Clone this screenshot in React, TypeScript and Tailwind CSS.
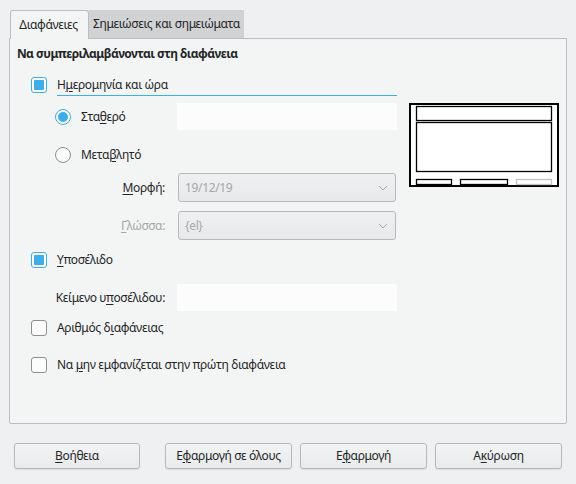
import React from "react";

// Underline one character (keyboard mnemonic)
function Mn({ text, i }: { text: string; i: number }) {
  return (
    <>
      {text.slice(0, i)}
      <span className="underline underline-offset-2 decoration-1">{text[i]}</span>
      {text.slice(i + 1)}
    </>
  );
}

function CheckBox({ checked }: { checked?: boolean }) {
  return checked ? (
    <div className="w-4 h-4 shrink-0 rounded-[3px] border border-[#3daee9] bg-[#fcfcfc] flex items-center justify-center">
      <div className="w-[10px] h-[10px] rounded-[1px] bg-[#3daee9]" />
    </div>
  ) : (
    <div className="w-4 h-4 shrink-0 rounded-[3px] border border-[#8d8f91] bg-[#fcfcfc]" />
  );
}

function Radio({ checked }: { checked?: boolean }) {
  return checked ? (
    <div className="w-4 h-4 shrink-0 rounded-full border border-[#3daee9] bg-[#fcfcfc] flex items-center justify-center">
      <div className="w-[10px] h-[10px] rounded-full bg-[#3daee9]" />
    </div>
  ) : (
    <div className="w-4 h-4 shrink-0 rounded-full border border-[#8d8f91] bg-[#fcfcfc]" />
  );
}

function Combo({ value }: { value: string }) {
  return (
    <div className="ml-[13px] w-[218px] h-full rounded-[3px] border border-[#b7b8b9] bg-gradient-to-b from-[#eff0f1] to-[#e8e9ea] flex items-center justify-between pl-[6px] pr-[7px] text-[#a5a7a8]">
      <span>{value}</span>
      <svg width="10" height="6" viewBox="0 0 10 6">
        <path d="M1 1 L5 5 L9 1" fill="none" stroke="#a5a7a8" strokeWidth="1" />
      </svg>
    </div>
  );
}

function Button({ children, w, ml }: { children: React.ReactNode; w: string; ml: string }) {
  return (
    <div
      className={`${w} ${ml} h-[26px] rounded-[3px] border border-[#b7b8b9] bg-gradient-to-b from-[#f2f3f3] to-[#e9eaeb] shadow-[0_1px_1px_rgba(0,0,0,0.08)] flex items-center justify-center`}
    >
      {children}
    </div>
  );
}

function Preview() {
  return (
    <svg width="150" height="84" viewBox="0 0 150 84" className="block">
      <rect x="1" y="1" width="148" height="82" fill="#ffffff" stroke="#000" strokeWidth="2" />
      <rect x="7.5" y="3.5" width="135" height="14" fill="none" stroke="#000" strokeWidth="1.3" />
      <rect x="7.5" y="19.5" width="135" height="49" fill="none" stroke="#000" strokeWidth="1.3" />
      <rect x="7.5" y="76.5" width="35" height="5" fill="none" stroke="#000" strokeWidth="1.3" />
      <rect x="51.5" y="76.5" width="47" height="5" fill="none" stroke="#000" strokeWidth="1.3" />
      <rect x="107.5" y="76.5" width="35" height="5" fill="none" stroke="#c4c4c4" strokeWidth="1.3" />
    </svg>
  );
}

export default function App() {
  return (
    <div className="w-[576px] h-[484px] bg-[#eff0f1] pl-[9px] pt-[10px] text-[12px] tracking-[-0.35px] text-[#232627] font-['Noto_Sans','DejaVu_Sans',sans-serif] overflow-hidden">
      {/* tabs */}
      <div className="flex h-[28px] pl-[1px] items-end">
        <div className="relative z-10 w-[79px] h-[29px] -mb-[1px] rounded-t-[3px] border border-b-0 border-[#bcbdbe] bg-[#f3f4f4] flex items-center justify-center pb-[1px] pr-[2px]">
          Διαφάνειες
        </div>
        <div className="w-[155px] h-[28px] bg-[#d1d2d3] flex items-center justify-center whitespace-nowrap">
          Σημειώσεις και σημειώματα
        </div>
      </div>

      {/* panel */}
      <div className="w-[558px] h-[386px] border border-[#bcbdbe] rounded-b-[2px] bg-[#f3f4f4] pt-[6px] pl-[7px]">
        <div className="h-[18px] leading-[18px] font-bold tracking-[-0.55px]">Να συμπεριλαμβάνονται στη διαφάνεια</div>

        <div className="flex">
          <div className="w-[380px] flex flex-col">
            <div className="mt-[10px] h-[23px] pl-[14px] flex items-center">
              <CheckBox checked />
              <div className="ml-[10px] flex-1 h-full border-b border-[#3daee9] flex items-center pt-[1px]">
                <Mn text="Ημερομηνία και ώρα" i={1} />
              </div>
            </div>

            <div className="mt-[7px] h-[27px] pl-[38px] flex items-center">
              <Radio checked />
              <div className="ml-[10px] w-[96px]">
                <Mn text="Σταθερό" i={3} />
              </div>
              <div className="w-[220px] h-full bg-[#fcfcfc]" />
            </div>

            <div className="mt-[11px] h-[27px] pl-[38px] flex items-center">
              <Radio />
              <div className="ml-[10px]">
                <Mn text="Μεταβλητό" i={4} />
              </div>
            </div>

            <div className="mt-[5px] h-[29px] flex items-center">
              <div className="w-[148px] text-right">
                <Mn text="Μορφή:" i={0} />
              </div>
              <Combo value="19/12/19" />
            </div>

            <div className="mt-[9px] h-[29px] flex items-center">
              <div className="w-[148px] text-right text-[#a5a7a8]">
                <Mn text="Γλώσσα:" i={0} />
              </div>
              <Combo value="{el}" />
            </div>

            <div className="mt-[10px] h-[20px] pl-[14px] flex items-center">
              <CheckBox checked />
              <div className="ml-[10px]">
                <Mn text="Υποσέλιδο" i={0} />
              </div>
            </div>

            <div className="mt-[14px] h-[27px] flex items-center">
              <div className="w-[148px] text-right">
                <Mn text="Κείμενο υποσέλιδου:" i={9} />
              </div>
              <div className="ml-[12px] w-[220px] h-full bg-[#fcfcfc]" />
            </div>

            <div className="mt-[7px] h-[20px] pl-[14px] flex items-center">
              <CheckBox />
              <div className="ml-[10px]">
                <Mn text="Αριθμός διαφάνειας" i={9} />
              </div>
            </div>

            <div className="mt-[17px] h-[20px] pl-[14px] flex items-center">
              <CheckBox />
              <div className="ml-[10px]">
                <Mn text="Να μην εμφανίζεται στην πρώτη διαφάνεια" i={3} />
              </div>
            </div>
          </div>

          <div className="ml-[12px] mt-[40px]">
            <Preview />
          </div>
        </div>
      </div>

      {/* buttons */}
      <div className="mt-[19px] pl-[5px] flex">
        <Button w="w-[126px]" ml="ml-0">
          <Mn text="Βοήθεια" i={0} />
        </Button>
        <Button w="w-[127px]" ml="ml-[25px]">
          <Mn text="Εφαρμογή σε όλους" i={1} />
        </Button>
        <Button w="w-[127px]" ml="ml-[8px]">
          <Mn text="Εφαρμογή" i={1} />
        </Button>
        <Button w="w-[127px]" ml="ml-[8px]">
          <Mn text="Ακύρωση" i={1} />
        </Button>
      </div>
    </div>
  );
}
